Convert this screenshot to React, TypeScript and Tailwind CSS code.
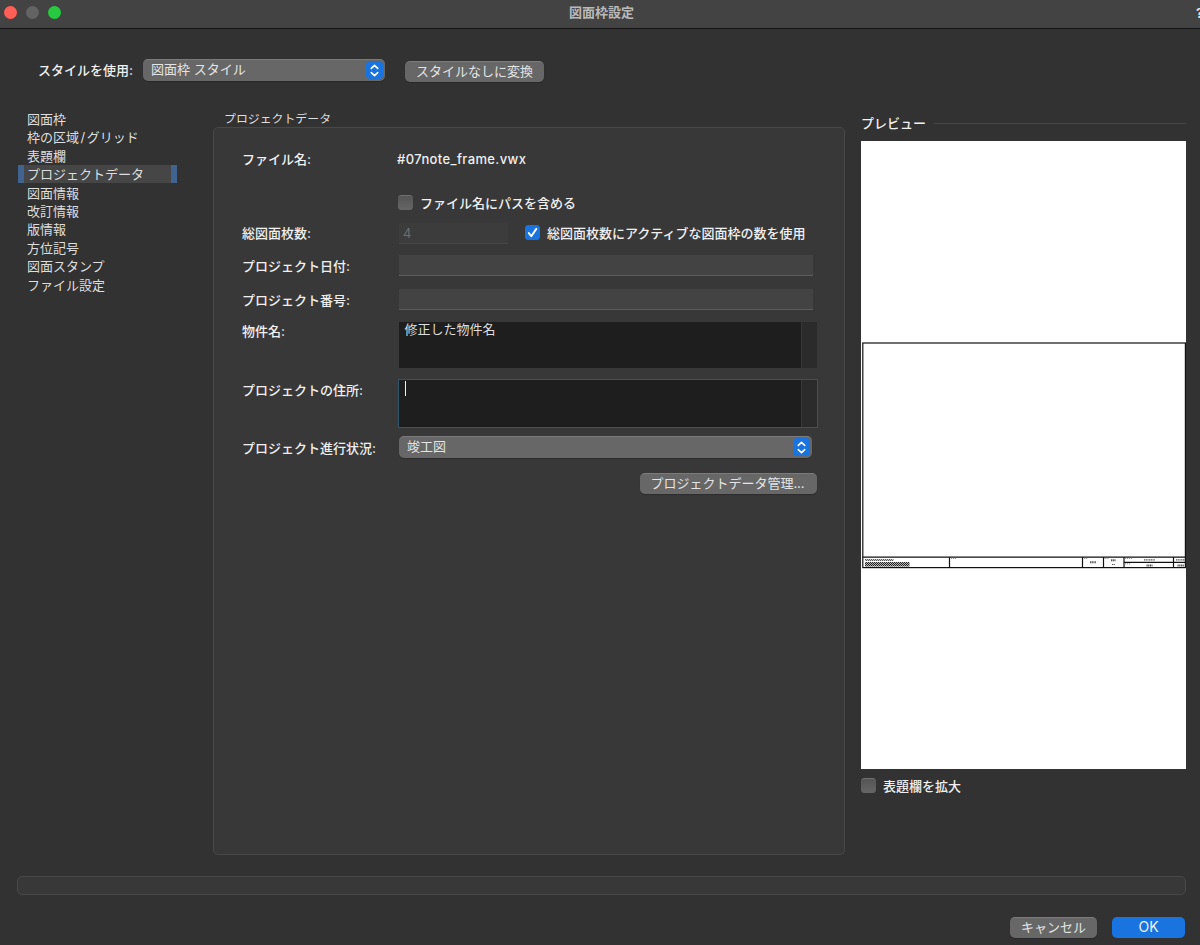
import { ReactNode, useState } from 'react'
import clsx from 'clsx'

interface SelectProps {
    value: string,
    className?: string
}

interface CheckProps {
    label: string,
    checked: boolean,
    className?: string,
    onChange: () => void
}

interface Menu {
    key: string,
    label: ReactNode
}

const menus: Menu[] = [
    { key: 'frame', label: '図面枠' },
    { key: 'grid', label: <>枠の区域<span className="px-[1.5px]">/</span>グリッド</> },
    { key: 'title', label: '表題欄' },
    { key: 'project', label: 'プロジェクトデータ' },
    { key: 'sheet', label: '図面情報' },
    { key: 'revision', label: '改訂情報' },
    { key: 'issue', label: '版情報' },
    { key: 'north', label: '方位記号' },
    { key: 'stamp', label: '図面スタンプ' },
    { key: 'file', label: 'ファイル設定' },
]

const PopupSelect = ({ value, className } : SelectProps) => {
    return (
        <div className={clsx(
            "flex justify-between items-center rounded-[5px] bg-[#676767] border-t border-[#7b7b7b] pl-2 pr-[2px] text-[#e4e4e4] shadow-[0_1px_1px_rgba(0,0,0,0.2)]",
            className
        )}>
            <span className="-mt-[3px]">{value}</span>
            <span className="w-[17px] h-[18px] -mt-px rounded-[4px] bg-[#1a74e0] grid place-items-center">
                <svg width="17" height="17" viewBox="0 0 17 17" fill="none" stroke="#fff" strokeWidth="1.6" strokeLinecap="round" strokeLinejoin="round">
                    <path d="M5.3 6.4 8.5 3.4 11.7 6.4" />
                    <path d="M5.3 10.6 8.5 13.6 11.7 10.6" />
                </svg>
            </span>
        </div>
    )
}

const CheckBox = ({ label, checked, className, onChange } : CheckProps) => {
    return (
        <label className={clsx("flex items-center whitespace-nowrap font-medium text-[#f0f0f0]", className)}>
            <input type="checkbox" hidden checked={checked} onChange={onChange} />
            <span className={clsx(
                "w-[15px] h-[15px] rounded-[3.5px] mr-[7px] -mt-px shrink-0",
                checked ? "bg-[#1a74e0]" : "bg-linear-to-b from-[#555555] to-[#666666] border-t border-[#707070]"
            )}>
                {
                    checked && (
                        <svg width="15" height="15" viewBox="0 0 15 15" fill="none" stroke="#fff" strokeWidth="1.9" strokeLinecap="round" strokeLinejoin="round">
                            <path d="M3.8 8.1 6.3 11.2 11.3 3.9" />
                        </svg>
                    )
                }
            </span>
            <span>{label}</span>
        </label>
    )
}

const Preview = () => {
    return (
        <svg width="325" height="628" viewBox="861 141 325 628" className="bg-white block" stroke="#111" fill="none">
            <defs>
                <pattern id="dots" width="2" height="2" patternUnits="userSpaceOnUse">
                    <rect width="2" height="2" fill="#b5b5b5" stroke="none" />
                    <rect width="1" height="1" fill="#222" stroke="none" />
                    <rect x="1" y="1" width="1" height="1" fill="#222" stroke="none" />
                </pattern>
            </defs>
            <rect x="862.8" y="343" width="322.6" height="224.6" strokeWidth="1.2" />
            <path d="M863 557.2H1185.5M949.5 557V568M1082.5 557V568M1103.5 557V568M1124 557V568M1173.5 557V568M1124 562.4H1185.5" strokeWidth="1.2" />
            <rect x="865" y="559" width="28.5" height="2" fill="url(#dots)" stroke="none" opacity="0.75" />
            <rect x="865" y="562" width="44.5" height="4.5" fill="url(#dots)" stroke="none" />
            <g stroke="#555" strokeWidth="2" strokeDasharray="1.2 0.5">
                <path d="M1090 562.3H1096" />
                <path d="M1111 560.3H1115.5" />
                <path d="M1112 564.5H1115" strokeWidth="1" />
                <path d="M1144 559.9H1155" strokeWidth="1.3" />
                <path d="M1146.5 565.5H1152.5" />
                <path d="M1176 559.9H1185" strokeWidth="1.3" />
                <path d="M1177.5 565.5H1184" />
            </g>
            <g stroke="#777" strokeWidth="0.8" strokeDasharray="1.2 0.8">
                <path d="M951 558.4H957" />
                <path d="M1084 558.4H1088" />
                <path d="M1104.5 558.4H1109" />
                <path d="M1125 558.4H1132" />
                <path d="M1125 563.8H1131" />
            </g>
        </svg>
    )
}

const App = () => {
    const [selected, setSelected] = useState<string>('project')
    const [includePath, setIncludePath] = useState<boolean>(false)
    const [useActiveCount, setUseActiveCount] = useState<boolean>(true)
    const [zoomTitle, setZoomTitle] = useState<boolean>(false)

    const button = "h-[21px] rounded-[5px] bg-[#676767] border-t border-[#7b7b7b] text-[#e4e4e4] flex items-center justify-center pb-[2px] whitespace-nowrap shadow-[0_1px_1px_rgba(0,0,0,0.2)]"
    const label = "w-[156px] shrink-0 font-medium text-[#f0f0f0] whitespace-nowrap"

    return (
        <div className="w-[1200px] h-[945px] overflow-hidden bg-[#323232] flex flex-col text-[13px] leading-[18px] font-['Inter','Noto_Sans_CJK_JP',sans-serif]">
            <header className="h-[29px] shrink-0 bg-[#434343] border-b border-[#151515] flex items-center pb-[3px]">
                <div className="w-[100px] flex gap-[9px] pl-1">
                    <span className="w-[13px] h-[13px] rounded-full bg-[#ff5f57]" />
                    <span className="w-[13px] h-[13px] rounded-full bg-[#636363]" />
                    <span className="w-[13px] h-[13px] rounded-full bg-[#28c840]" />
                </div>
                <h1 className="flex-1 text-center font-bold text-[#b9b9b9] pl-[3px] -mt-px">図面枠設定</h1>
                <div className="w-[100px] pl-[96px] text-[#e4e4e4] font-bold whitespace-nowrap">?</div>
            </header>

            <div className="h-[71px] shrink-0 flex items-start pl-[38px] pt-[30px] text-[#f0f0f0]">
                <span className="w-[105px] mt-[2px] font-medium">スタイルを使用:</span>
                <PopupSelect value="図面枠 スタイル" className="w-[242px] h-[22px]" />
                <button className={clsx(button, "w-[139px] ml-5 mt-[2px]")}>スタイルなしに変換</button>
            </div>

            <main className="h-[776px] shrink-0 flex">
                <ul className="w-[213px] pl-[18px] pt-[9.8px] text-[#dedede]">
                    {
                        menus.map((menu) => (
                            <li
                                key={menu.key}
                                className={clsx(
                                    "w-[159px] h-[18.4px] flex items-center whitespace-nowrap cursor-default border-x-[6px] pl-[3px]",
                                    selected === menu.key ? "bg-[#464646] border-[#41638f]" : "border-transparent"
                                )}
                                onClick={() => setSelected(menu.key)}
                            >
                                {menu.label}
                            </li>
                        ))
                    }
                </ul>

                <section className="w-[632px] shrink-0">
                    <h2 className="h-[27px] pt-[10px] pl-[11px] text-[11.9px] text-[#dedede]">プロジェクトデータ</h2>
                    <div className="h-[728px] rounded-[5px] border border-[#484848] bg-[#383838] pl-[28px] pt-[16px] flex flex-col">
                        <div className="h-[31px] flex items-center pb-[2px]">
                            <span className={label}>ファイル名:</span>
                            <span className="text-[#f0f0f0] font-medium tracking-[0.39px] -ml-px">#07note_frame.vwx</span>
                        </div>
                        <CheckBox
                            label="ファイル名にパスを含める"
                            checked={includePath}
                            className="h-[22px] mt-[17px] ml-[156px]"
                            onChange={() => setIncludePath(!includePath)}
                        />
                        <div className="h-[22px] mt-[8px] flex items-center">
                            <span className={label}>総図面枚数:</span>
                            <div className="w-[109px] h-[21px] ml-px pl-1 bg-[#3c3c3c] border-b border-[#464646] text-[#6e6e6e] flex items-center">4</div>
                            <CheckBox
                                label="総図面枚数にアクティブな図面枠の数を使用"
                                checked={useActiveCount}
                                className="ml-[17px]"
                                onChange={() => setUseActiveCount(!useActiveCount)}
                            />
                        </div>
                        <div className="h-[21px] mt-[11px] flex items-center">
                            <span className={label}>プロジェクト日付:</span>
                            <div className="w-[414px] h-[21px] ml-px bg-[#434343] border-b border-[#5c5c5c]" />
                        </div>
                        <div className="h-[21px] mt-[13px] flex items-center">
                            <span className={label}>プロジェクト番号:</span>
                            <div className="w-[414px] h-[21px] ml-px bg-[#434343] border-b border-[#5c5c5c]" />
                        </div>
                        <div className="h-[46px] mt-[12px] flex">
                            <span className={label}>物件名:</span>
                            <div className="w-[418px] ml-px bg-[#1e1e1e] flex">
                                <div className="w-[402px] pl-[5.5px] -mt-[2px] text-[#dedede]">修正した物件名</div>
                                <div className="flex-1 bg-[#2b2b2b] border-l border-[#383838]" />
                            </div>
                        </div>
                        <div className="h-[49px] mt-[11px] flex">
                            <span className={clsx(label, "mt-[2px]")}>プロジェクトの住所:</span>
                            <div className="w-[420px] bg-[#1e1e1e] border border-[#31566c] flex">
                                <div className="w-[402px] pl-[6px] pt-px">
                                    <div className="w-px h-[15px] bg-[#f0f0f0]" />
                                </div>
                                <div className="flex-1 bg-[#2b2b2b] border-l border-[#383838]" />
                            </div>
                        </div>
                        <div className="h-[22px] mt-[8px] flex items-center">
                            <span className={clsx(label, "pt-px")}>プロジェクト進行状況:</span>
                            <PopupSelect value="竣工図" className="w-[413px] h-[22px] ml-px" />
                        </div>
                        <button className={clsx(button, "w-[177px] mt-[15px] ml-[398px] pr-[2px]")}>プロジェクトデータ管理...</button>
                    </div>
                </section>

                <aside className="pl-[16px] pt-[14px]">
                    <div className="h-[27px] w-[325px] flex items-start gap-2">
                        <span className="text-[#f0f0f0] font-medium">プレビュー</span>
                        <div className="flex-1 h-px bg-[#464646] mt-[9px]" />
                    </div>
                    <Preview />
                    <CheckBox
                        label="表題欄を拡大"
                        checked={zoomTitle}
                        className="mt-[8px]"
                        onChange={() => setZoomTitle(!zoomTitle)}
                    />
                </aside>
            </main>

            <div className="h-[19px] shrink-0 ml-[17px] mr-[14px] rounded-[5px] border border-[#484848] bg-[#383838]" />

            <footer className="flex justify-end gap-[15px] pr-[15px] pt-[22px]">
                <button className={clsx(button, "w-[87px]")}>キャンセル</button>
                <button className="w-[73px] h-[21px] rounded-[5px] bg-[#1a74e0] text-[#f0f0f0] text-[14px] flex items-center justify-center pb-px">OK</button>
            </footer>
        </div>
    )
}

export default App
